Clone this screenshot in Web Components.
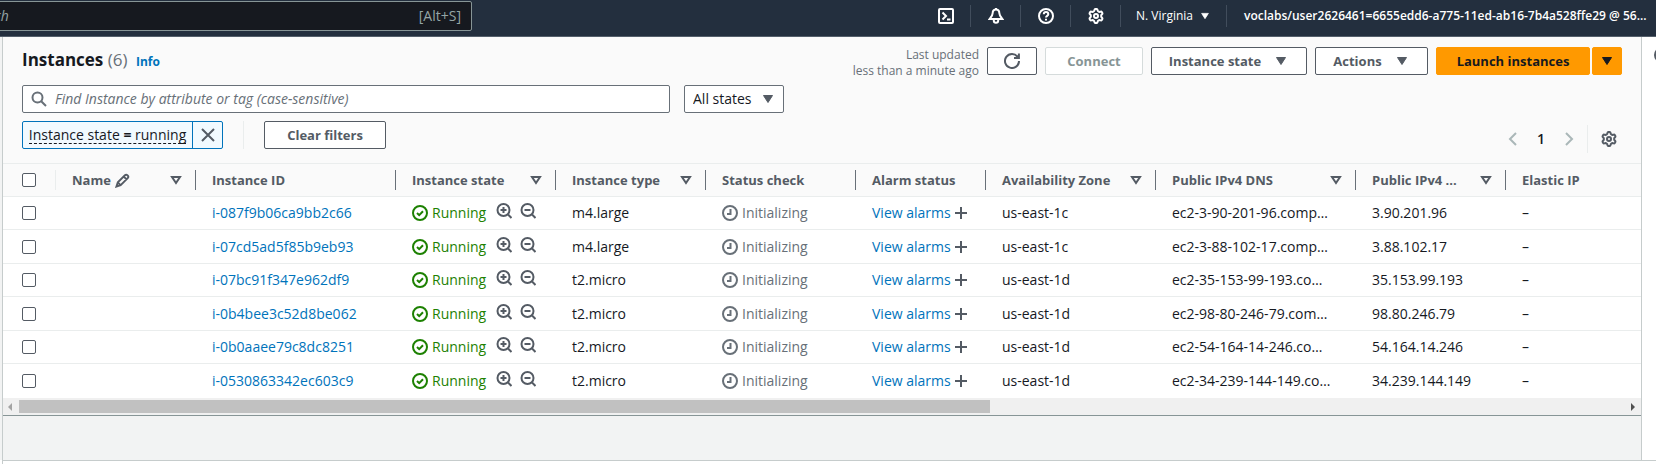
<!DOCTYPE html>
<html lang="en">
<head>
<meta charset="utf-8">
<title>Instances | EC2</title>
<style>
html,body{margin:0;min-height:100%}
body{font:14px/20px "Open Sans","Noto Sans",sans-serif;color:#16191f;background:#fff}
</style>
</head>
<body>
<console-page></console-page>
<script>
const gear = (() => {
  const pts = [];
  for (let i = 0; i < 72; i++) {
    const a = i * Math.PI / 36;
    const k = Math.max(-1, Math.min(1, -1.6 * Math.cos(6 * a)));
    const r = 6.1 + 0.9 * k;
    pts.push((8 + r * Math.cos(a)).toFixed(2) + ' ' + (8 + r * Math.sin(a)).toFixed(2));
  }
  return '<path d="M' + pts.join('L') + 'Z"/><circle cx="8" cy="8" r="2"/>';
})();
const ICONS = {
  gear,
  terminal: '<rect x="1" y="1" width="14" height="14" rx="1"/><path d="M4.5 4.5 8 8l-3.500 3.500M9 11.500h3.500"/>',
  bell: '<path d="M8 1.500c-2.200 0-3.300 1.700-3.300 3.600 0 2.600-.9 3.600-3 5.900h12.600c-2.100-2.300-3-3.300-3-5.900 0-1.900-1.100-3.600-3.300-3.600ZM5.800 11v1.600a2.200 2.200 0 0 0 4.400 0V11M8 0v1.500"/>',
  help: '<circle cx="8" cy="8" r="7"/><path d="M5.800 6.300c0-1.400 1-2.200 2.200-2.200s2.300.8 2.300 2.100c0 1.600-2.300 1.700-2.300 3.300M8 10.700v1.800"/>',
  refresh: '<path d="M15 8a7 7 0 1 1-1.400-4.200M10 5h4.900V.4"/>',
  search: '<circle cx="6.500" cy="6.500" r="5"/><path d="m10.200 10.200 4.800 4.800"/>',
  close: '<path d="m2 2 12 12M14 2 2 14"/>',
  left: '<path d="m11 2-6 6 6 6"/>',
  right: '<path d="m5 2 6 6-6 6"/>',
  edit: '<path d="M1.500 14.500 3 10l7.600-7.600c1.800-1.800 4.800 1.200 3 3L6 13l-4.500 1.500ZM9.400 3.900l2.800 2.800M3 10l3 3"/>',
  caret: '<path d="M3.500 4.500h9L8 11.500Z" fill="currentColor" stroke-width="1"/>',
  sort: '<path d="M4 5h8l-4 6Z"/>',
  ok: '<circle cx="8" cy="8" r="7"/><path d="m5 8 2.200 2.200L11 6.300"/>',
  clock: '<circle cx="8" cy="8" r="7"/><path d="M8.500 4v5H5"/>',
  zoomin: '<circle cx="7.500" cy="7" r="6"/><path d="m12 11.500 3.500 3.500M4.500 7h6M7.500 4v6"/>',
  zoomout: '<circle cx="7.500" cy="7" r="6"/><path d="m12 11.500 3.500 3.500M4.500 7h6"/>',
  plus: '<path d="M8 2v12M2 8h12"/>',
  info: '<circle cx="8" cy="8" r="7"/><path d="M8 7v5M8 4v1.500"/>'
};

class UiIcon extends HTMLElement {
  connectedCallback() {
    const r = this.attachShadow({mode: 'open'});
    r.innerHTML = `<style>:host{display:inline-block;flex:none;width:16px;height:16px}svg{display:block;width:100%;height:100%}</style>
    <svg viewBox="0 0 16 16" fill="none" stroke="currentColor" stroke-width="2" aria-hidden="true">${ICONS[this.getAttribute('name')]}</svg>`;
  }
}
customElements.define('ui-icon', UiIcon);

class UiButton extends HTMLElement {
  connectedCallback() {
    const r = this.attachShadow({mode: 'open'});
    const label = this.getAttribute('label');
    r.innerHTML = `<style>
    :host{display:block;flex:none}
    button{box-sizing:border-box;width:100%;height:28px;display:flex;align-items:center;justify-content:center;gap:8px;padding:0;margin:0;
      font:700 13px/20px "Open Sans","Noto Sans",sans-serif;color:#545b64;background:#fff;border:1px solid #545b64;border-radius:2px;white-space:nowrap}
    button:disabled{color:#879596;border-color:#d5dbdb}
    :host([primary]) button{background:#ff9900;border-color:#ff9900;color:#16191f}
    </style><button type="button"${this.hasAttribute('disabled') ? ' disabled' : ''}${label ? ` aria-label="${label}"` : ''}><slot></slot></button>`;
  }
}
customElements.define('ui-button', UiButton);

class ConsoleHeader extends HTMLElement {
  connectedCallback() {
    this.attachShadow({mode: 'open'}).innerHTML = `<style>
    :host{display:flex;justify-content:space-between;align-items:flex-start;height:36px;background:#232f3e;border-bottom:1px solid #545f6b;overflow:hidden}
    label{box-sizing:border-box;display:flex;align-items:center;flex:0 0 516px;height:30px;margin:1px 0 0 -44px;padding:0 10px;background:#16191f;border:1px solid #879596;border-radius:2px;color:#95a5a6}
    input{flex:1;min-width:0;border:0;padding:0;background:none;font:inherit;color:inherit;outline:0}
    input::placeholder{color:#95a5a6;font-style:italic;opacity:1}
    nav{display:flex;align-items:center;height:32px;margin-right:-10px}
    button{box-sizing:border-box;height:22px;width:50px;display:flex;align-items:center;justify-content:center;gap:6px;padding:0;border:0;border-right:1px solid #414d5c;background:none;color:#fff;font:12px/16px "Open Sans","Noto Sans",sans-serif;white-space:nowrap}
    .region{width:106px}
    .user{width:439px;border:0;padding-left:17px;justify-content:space-between;font-weight:600}
    .region ui-icon,.user ui-icon{width:12px;height:12px}
    </style>
    <label><input type="search" placeholder="Search" aria-label="Search"><span>[Alt+S]</span></label>
    <nav aria-label="Account">
      <button aria-label="CloudShell"><ui-icon name="terminal"></ui-icon></button>
      <button aria-label="Notifications"><ui-icon name="bell"></ui-icon></button>
      <button aria-label="Help"><ui-icon name="help"></ui-icon></button>
      <button aria-label="Settings"><ui-icon name="gear"></ui-icon></button>
      <button class="region">N. Virginia<ui-icon name="caret"></ui-icon></button>
      <button class="user"><span>voclabs/user2626461=6655edd6-a775-11ed-ab16-7b4a528ffe29 @ 56...</span><ui-icon name="caret"></ui-icon></button>
    </nav>`;
  }
}
customElements.define('console-header', ConsoleHeader);

class InstanceToolbar extends HTMLElement {
  connectedCallback() {
    this.attachShadow({mode: 'open'}).innerHTML = `<style>
    :host{display:block;padding:10px 19px;background:#fafafa;border-bottom:1px solid #eaeded}
    .row{display:flex;align-items:flex-start;gap:8px}
    .row+.row{margin-top:6px}
    .row+.row+.row{margin-top:8px}
    h1{margin:0;flex:1;font-size:17px;line-height:26px;font-weight:700;white-space:nowrap}
    h1 span{color:#687078;font-weight:400}
    h1 a{font-size:12px;font-weight:700;color:#0073bb;text-decoration:none;margin-left:4px}
    .updated{font-size:12px;line-height:16px;color:#687078;text-align:right}
    .refresh{width:50px}.connect{width:98px}.state{width:156px}.actions{width:113px}.clear{width:122px}
    .split{display:flex;gap:2px}.launch{width:154px}.more{width:30px}
    .state ui-icon,.actions ui-icon{margin-left:4px}
    .find{box-sizing:border-box;flex:0 1 648px;height:28px;display:flex;align-items:center;gap:8px;padding:0 8px;background:#fff;border:1px solid #687078;border-radius:2px;color:#687078}
    .find input{flex:1;min-width:0;border:0;padding:0;background:none;font:inherit;outline:0}
    .find input::placeholder{color:#687078;font-style:italic;opacity:1}
    .select{position:relative;width:100px;margin-left:6px;color:#545b64}
    select{appearance:none;box-sizing:border-box;width:100%;height:28px;padding:0 8px;font:inherit;color:#16191f;background:#fff;border:1px solid #687078;border-radius:2px}
    .select ui-icon{position:absolute;right:8px;top:6px;pointer-events:none}
    .token{box-sizing:border-box;display:flex;height:28px;width:201px;background:#f1faff;border:1px solid #0073bb;border-radius:2px;color:#545b64}
    .token button{border:0;background:none;padding:0;font:inherit;color:inherit}
    .token .text{flex:1;display:flex;align-items:center;justify-content:center}
    .token .text span{color:#16191f;line-height:17px;border-bottom:1px dashed #16191f;white-space:nowrap}
    .token .x{width:30px;display:grid;place-items:center;border-left:1px solid #0073bb}
    .bar{width:1px;height:28px;background:#eaeded}
    .row .bar.first{margin:0 12px}
    .pages{display:flex;align-items:center;margin:4px 5px 0 auto;color:#aab7b8}
    .pages button{border:0;background:none;padding:0;color:inherit;display:flex;font:inherit}
    .pages .n{width:40px;justify-content:center;color:#16191f;font-weight:600}
    .pages .bar{margin:0 13px 0 10px}
    .pages .prefs{color:#545b64}
    </style>
    <div class="row">
      <h1>Instances <span>(6)</span> <a href="#info">Info</a></h1>
      <div class="updated">Last updated<br>less than a minute ago</div>
      <ui-button class="refresh" label="Refresh"><ui-icon name="refresh"></ui-icon></ui-button>
      <ui-button class="connect" disabled>Connect</ui-button>
      <ui-button class="state">Instance state<ui-icon name="caret"></ui-icon></ui-button>
      <ui-button class="actions">Actions<ui-icon name="caret"></ui-icon></ui-button>
      <div class="split"><ui-button class="launch" primary>Launch instances</ui-button><ui-button class="more" primary label="More launch options"><ui-icon name="caret"></ui-icon></ui-button></div>
    </div>
    <div class="row">
      <label class="find"><ui-icon name="search"></ui-icon><input type="text" aria-label="Find instances" placeholder="Find Instance by attribute or tag (case-sensitive)"></label>
      <div class="select"><select aria-label="State filter"><option>All states</option></select><ui-icon name="caret"></ui-icon></div>
    </div>
    <div class="row">
      <div class="token"><button class="text"><span>Instance state <b>=</b> running</span></button><button class="x" aria-label="Remove filter"><ui-icon name="close"></ui-icon></button></div>
      <div class="bar first"></div>
      <ui-button class="clear">Clear filters</ui-button>
      <div class="pages"><button aria-label="Previous page"><ui-icon name="left"></ui-icon></button><button class="n">1</button><button aria-label="Next page"><ui-icon name="right"></ui-icon></button><div class="bar"></div><button class="prefs" aria-label="Preferences"><ui-icon name="gear"></ui-icon></button></div>
    </div>`;
  }
}
customElements.define('instance-toolbar', InstanceToolbar);

const COLUMNS = [['Name', 140, 1, 1], ['Instance ID', 200], ['Instance state', 160, 1], ['Instance type', 150, 1], ['Status check', 150], ['Alarm status', 130], ['Availability Zone', 170, 1], ['Public IPv4 DNS', 200, 1], ['Public IPv4 ...', 150, 1], ['Elastic IP', 0]];
const ROWS = [
  ['i-087f9b06ca9bb2c66', 'm4.large', 'us-east-1c', 'ec2-3-90-201-96.comp…', '3.90.201.96'],
  ['i-07cd5ad5f85b9eb93', 'm4.large', 'us-east-1c', 'ec2-3-88-102-17.comp…', '3.88.102.17'],
  ['i-07bc91f347e962df9', 't2.micro', 'us-east-1d', 'ec2-35-153-99-193.co…', '35.153.99.193'],
  ['i-0b4bee3c52d8be062', 't2.micro', 'us-east-1d', 'ec2-98-80-246-79.com…', '98.80.246.79'],
  ['i-0b0aaee79c8dc8251', 't2.micro', 'us-east-1d', 'ec2-54-164-14-246.co…', '54.164.14.246'],
  ['i-0530863342ec603c9', 't2.micro', 'us-east-1d', 'ec2-34-239-144-149.co…', '34.239.144.149']
];
class InstanceTable extends HTMLElement {
  connectedCallback() {
    const head = COLUMNS.map(([t, , s, e]) => `<th scope="col"><div class="h"><span>${t}</span>${e ? '<ui-icon class="edit" name="edit"></ui-icon>' : ''}${s ? '<ui-icon class="sort" name="sort"></ui-icon>' : ''}</div></th>`).join('');
    const body = ROWS.map(([id, type, az, dns, ip]) => `<tr><td class="c"><input type="checkbox" aria-label="Select ${id}"></td><td></td><td><a href="#${id}">${id}</a></td>
      <td><div class="f"><span class="f run"><ui-icon name="ok"></ui-icon>Running</span><button aria-label="Include state in filter"><ui-icon name="zoomin"></ui-icon></button><button aria-label="Exclude state from filter"><ui-icon name="zoomout"></ui-icon></button></div></td>
      <td>${type}</td><td><span class="f init"><ui-icon name="clock"></ui-icon>Initializing</span></td>
      <td><div class="f alarm"><a href="#alarms">View alarms</a><ui-icon class="plus" name="plus"></ui-icon></div></td><td>${az}</td><td>${dns}</td><td>${ip}</td><td>–</td></tr>`).join('');
    this.attachShadow({mode: 'open'}).innerHTML = `<style>
    :host{display:block;overflow:hidden;background:#fff}
    table{width:100%;table-layout:fixed;border-collapse:separate;border-spacing:0}
    th,td{box-sizing:border-box;padding:0;text-align:left;white-space:nowrap;border-bottom:1px solid #eaeded;height:33px;vertical-align:middle}
    tbody tr:nth-child(even) td{height:34px}
    tbody tr:last-child td{border-color:transparent}
    td{padding-left:16px;overflow:hidden}
    th{background:#fafafa;color:#545b64;font-size:13px;font-weight:700}
    .h{display:flex;align-items:center;height:20px;padding:0 11px 0 16px;border-right:1px solid #687078}
    th:last-child .h{border:0}
    .sort{margin-left:auto}
    .edit{margin-left:4px;width:15px;height:15px}
    .c,th.c{padding:0}
    th.c .h,td.c{padding-left:19px}
    th.c .h{border-color:#eaeded;padding-right:0}
    input{appearance:none;display:block;box-sizing:border-box;width:14px;height:14px;margin:0;border:1px solid #545b64;border-radius:2px;background:#fff}
    a{color:#0073bb;text-decoration:none}
    .f{display:flex;align-items:center;gap:4px}
    .run{width:80px;color:#1d8102}
    .init{color:#687078}
    .alarm{gap:2px}
    button{display:flex;padding:0 0 4px;border:0;background:none;color:#545b64;margin-right:4px}
    .plus{color:#545b64}
    </style>
    <table><colgroup><col style="width:53px">${COLUMNS.map(c => c[1] ? `<col style="width:${c[1]}px">` : '<col>').join('')}</colgroup>
    <thead><tr><th class="c"><div class="h"><input type="checkbox" aria-label="Select all"></div></th>${head}</tr></thead><tbody>${body}</tbody></table>`;
  }
}
customElements.define('instance-table', InstanceTable);

class ScrollTrack extends HTMLElement {
  connectedCallback() {
    this.attachShadow({mode: 'open'}).innerHTML = `<style>
    :host{display:flex;align-items:center;justify-content:space-between;height:17px;padding:0 6px 0 5px;background:#f0f0f0;border-bottom:1px solid #879596}
    .arrow{border:4px solid transparent;border-left:0;border-right-color:#a3a3a3}
    .arrow.r{border-left:4px solid #505050;border-right:0}
    .lane{flex:1;margin:0 7px}
    .thumb{width:calc(60% + 8px);height:13px;background:#c1c1c1}
    </style><span class="arrow"></span><div class="lane"><div class="thumb"></div></div><span class="arrow r"></span>`;
  }
}
customElements.define('scroll-track', ScrollTrack);

class ConsolePage extends HTMLElement {
  connectedCallback() {
    this.attachShadow({mode: 'open'}).innerHTML = `<style>
    :host{display:block;overflow:hidden}
    .body{display:flex;background:#f2f3f3}
    main{flex:1;min-width:0;margin-left:2px;border:solid #c6cccc;border-width:0 1px}
    .gap{height:44px}
    aside{flex:none;width:14px;background:#fff;overflow:hidden}
    aside button{display:flex;padding:0;margin:10px 0 0 12px;border:0;background:none;color:#545b64}
    footer{margin-left:2px;min-height:3px;background:#fff;border-top:1px solid #c6cccc;border-left:1px solid #c6cccc}
    </style>
    <console-header></console-header>
    <div class="body"><main><instance-toolbar></instance-toolbar><instance-table></instance-table><scroll-track></scroll-track><div class="gap"></div></main>
    <aside><button aria-label="Open info panel"><ui-icon name="info"></ui-icon></button></aside></div>
    <footer></footer>`;
  }
}
customElements.define('console-page', ConsolePage);
</script>
</body>
</html>
